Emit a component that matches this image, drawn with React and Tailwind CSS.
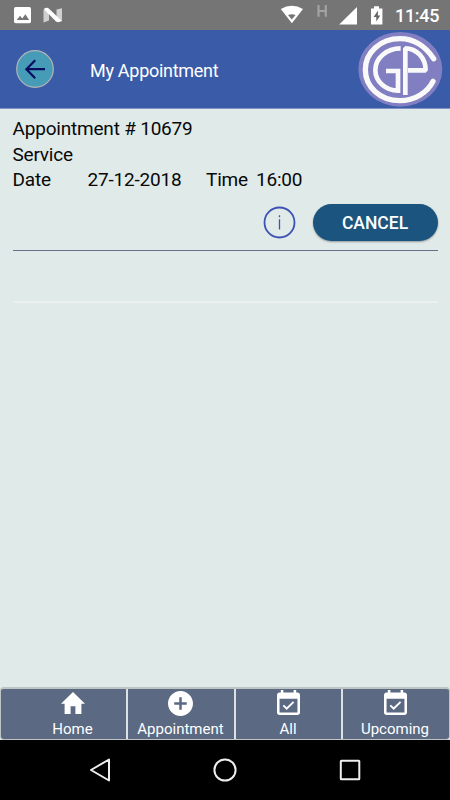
const tabs = [
  { label: 'Home', icon: 'home', box: 'w-[125px] pl-[18px]' },
  { label: 'Appointment', icon: 'plus', box: 'w-[108px] border-l-2 pr-px' },
  { label: 'All', icon: 'event', box: 'w-[107px] border-l-2 pr-px' },
  { label: 'Upcoming', icon: 'event', box: 'w-[108px] border-l-2 pr-[2px]' },
];

const paths = {
  home: 'M10 20v-6h4v6h5v-8h3L12 3 2 12h3v8z',
  plus: 'M12 2C6.48 2 2 6.48 2 12s4.48 10 10 10 10-4.48 10-10S17.52 2 12 2zm5 11h-4v4h-2v-4H7v-2h4V7h2v4h4v2z',
  event: 'M16.53 11.06L15.47 10l-4.88 4.88-2.12-2.12-1.06 1.06L10.59 17l5.94-5.94zM19 3h-1V1h-2v2H8V1H6v2H5c-1.11 0-1.99.9-1.99 2L3 19c0 1.1.89 2 2 2h14c1.1 0 2-.9 2-2V5c0-1.1-.9-2-2-2zm0 16H5V8h14v11z',
};

function TabIcon({ name }) {
  if (name === 'home') {
    return (
      <svg className="mt-[3px] h-[22px] w-[24px]" viewBox="2 3 20 17" preserveAspectRatio="none" fill="#fff">
        <path d={paths.home} />
      </svg>
    );
  }
  if (name === 'plus') {
    return (
      <svg className="mt-[2px] h-[25px] w-[25px]" viewBox="2 2 20 20" fill="#fff">
        <path d={paths.plus} />
      </svg>
    );
  }
  return (
    <svg className="mt-[1px] h-[25px] w-[23px]" viewBox="3 1 18 20" preserveAspectRatio="none" fill="#fff">
      <path d={paths.event} />
    </svg>
  );
}

function StatusBar() {
  return (
    <div className="flex h-[30px] shrink-0 bg-[#757575] text-white">
      <svg className="h-[30px] w-[70px]" viewBox="0 0 70 30">
        <rect x="14" y="7" width="17" height="16.3" rx="1.7" fill="#fff" />
        <path d="M16.7 20l3.4-4.3 2.1 2.7 3.2-4.1 3.7 5.7z" fill="#757575" />
        <path d="M43.5 9.5l5.5 1.5v9.5l-5.5 2zM56.5 9.5l5.5-1.3v13.3L56.5 20z" fill="#d0d0d0" />
        <path d="M43.8 8.9Q47 6.8 49.3 9L61.6 20.8Q58.8 23.2 56 21.4z" fill="#fff" />
      </svg>
      <svg className="ml-auto h-[30px] w-[120px]" viewBox="275 0 120 30">
        <path d="M280.8 9q11-6.4 22.2 0L291.9 23.3z" fill="#fff" />
        <path d="M288 15q4-1.6 7.6 0l-3.8 4.6z" fill="#757575" />
        <path d="M318.5 5v11.7M325.8 5v11.7M318 11h8" stroke="#a2a2a2" strokeWidth="2.2" />
        <path d="M339.2 24.5L357 7v17.5z" fill="#fff" />
        <path d="M371 8.4h3V6.2h5v2.2h3.4V24.4H371z" fill="#fff" />
        <path d="M378 10.5l-4.4 6.4h2.7v4.7l4-6.2h-2.5z" fill="#666" />
      </svg>
      <div className="w-[55px] pt-[4px] text-[18px] font-medium leading-[24px] tracking-[-0.3px]">11:45</div>
    </div>
  );
}

function Header() {
  return (
    <header className="flex h-[79px] shrink-0 items-center border-b border-[#8293c3] bg-[#3a5ba8]">
      <svg className="ml-[16px] h-[38px] w-[38px]" viewBox="0 0 38 38">
        <circle cx="19" cy="19" r="18.3" fill="#469bb7" stroke="#b4b4b4" strokeWidth="1.2" />
        <path d="M29 19.2H10.8M19.2 10.2l-8.8 9 8.8 9" fill="none" stroke="#080d62" strokeWidth="2.2" />
      </svg>
      <h1 className="ml-[36px] pt-[4px] text-[18px] leading-6 tracking-[-0.28px] text-white">My Appointment</h1>
      <svg className="ml-auto mr-[7px] h-[78px] w-[86px]" viewBox="21 6 258 234">
        <ellipse cx="151" cy="124" rx="126" ry="112" fill="#817fc2" />
        <g fill="none" stroke="#f9f9fa" strokeWidth="14">
          <path d="M251 92C224 52 190 32 150 32C91 32 46 73 46 125S91 218 150 218C194 218 232 194 249 160" strokeWidth="16" strokeLinecap="round" />
          <path d="M152 61C110 61 76 90 76 126S108 188 144 188V129H108" />
          <path d="M166 201V61C200 61 227 90 227 127H174" strokeLinejoin="bevel" />
        </g>
      </svg>
    </header>
  );
}

export default function App() {
  return (
    <div className="flex h-[800px] w-[450px] flex-col overflow-hidden bg-[#e0eae9] font-[Roboto,sans-serif] text-[#080808]">
      <StatusBar />
      <Header />
      <main className="flex-1 px-[12.5px] pt-[7px]">
        <div className="text-[19px] leading-[25.5px] tracking-[-0.2px]">
          <p>Appointment # 10679</p>
          <p>Service</p>
          <div className="flex">
            <span className="w-[75px]">Date</span>
            <span className="w-[118.5px]">27-12-2018</span>
            <span className="w-[50px]">Time</span>
            <span>16:00</span>
          </div>
        </div>
        <div className="mt-[11.3px] flex items-center justify-end">
          <svg className="mr-[16.5px] h-[33px] w-[33px]" viewBox="0 0 33 33" fill="none" stroke="#3f51b5">
            <circle cx="16.5" cy="16.5" r="15" strokeWidth="1.8" />
            <path d="M16.5 13.3v10.3M16.5 9.3v2" strokeWidth="1.3" />
          </svg>
          <button className="h-[37px] w-[125px] rounded-full bg-[#1b557f] pt-[2px] text-[17.5px] font-medium text-white shadow-[0_1px_2px_rgba(0,0,0,0.35)]">CANCEL</button>
        </div>
        <div className="mt-[9px] border-b border-[#65708a]" />
        <div className="mt-[50px] border-b-2 border-[#ebeff0]" />
      </main>
      <nav className="flex h-[53px] shrink-0 rounded-[4px] border border-t-2 border-[#bcc5c3] bg-[#5b6983] text-white">
        {tabs.map(({ label, icon, box }) => (
          <div key={label} className={`flex flex-col items-center border-[#dde1e5] ${box}`}>
            <div className="h-[31px]"><TabIcon name={icon} /></div>
            <span className="text-[15px] leading-[20px]">{label}</span>
          </div>
        ))}
      </nav>
      <footer className="h-[60px] shrink-0 bg-black">
        <svg className="h-[60px] w-[450px]" viewBox="0 0 450 60" fill="none" stroke="#eee" strokeWidth="2">
          <path d="M109 19.5v21L91 30z" strokeLinejoin="round" />
          <circle cx="225" cy="30" r="10.6" />
          <rect x="340.8" y="20.7" width="18.5" height="18.5" rx=".5" />
        </svg>
      </footer>
    </div>
  );
}
